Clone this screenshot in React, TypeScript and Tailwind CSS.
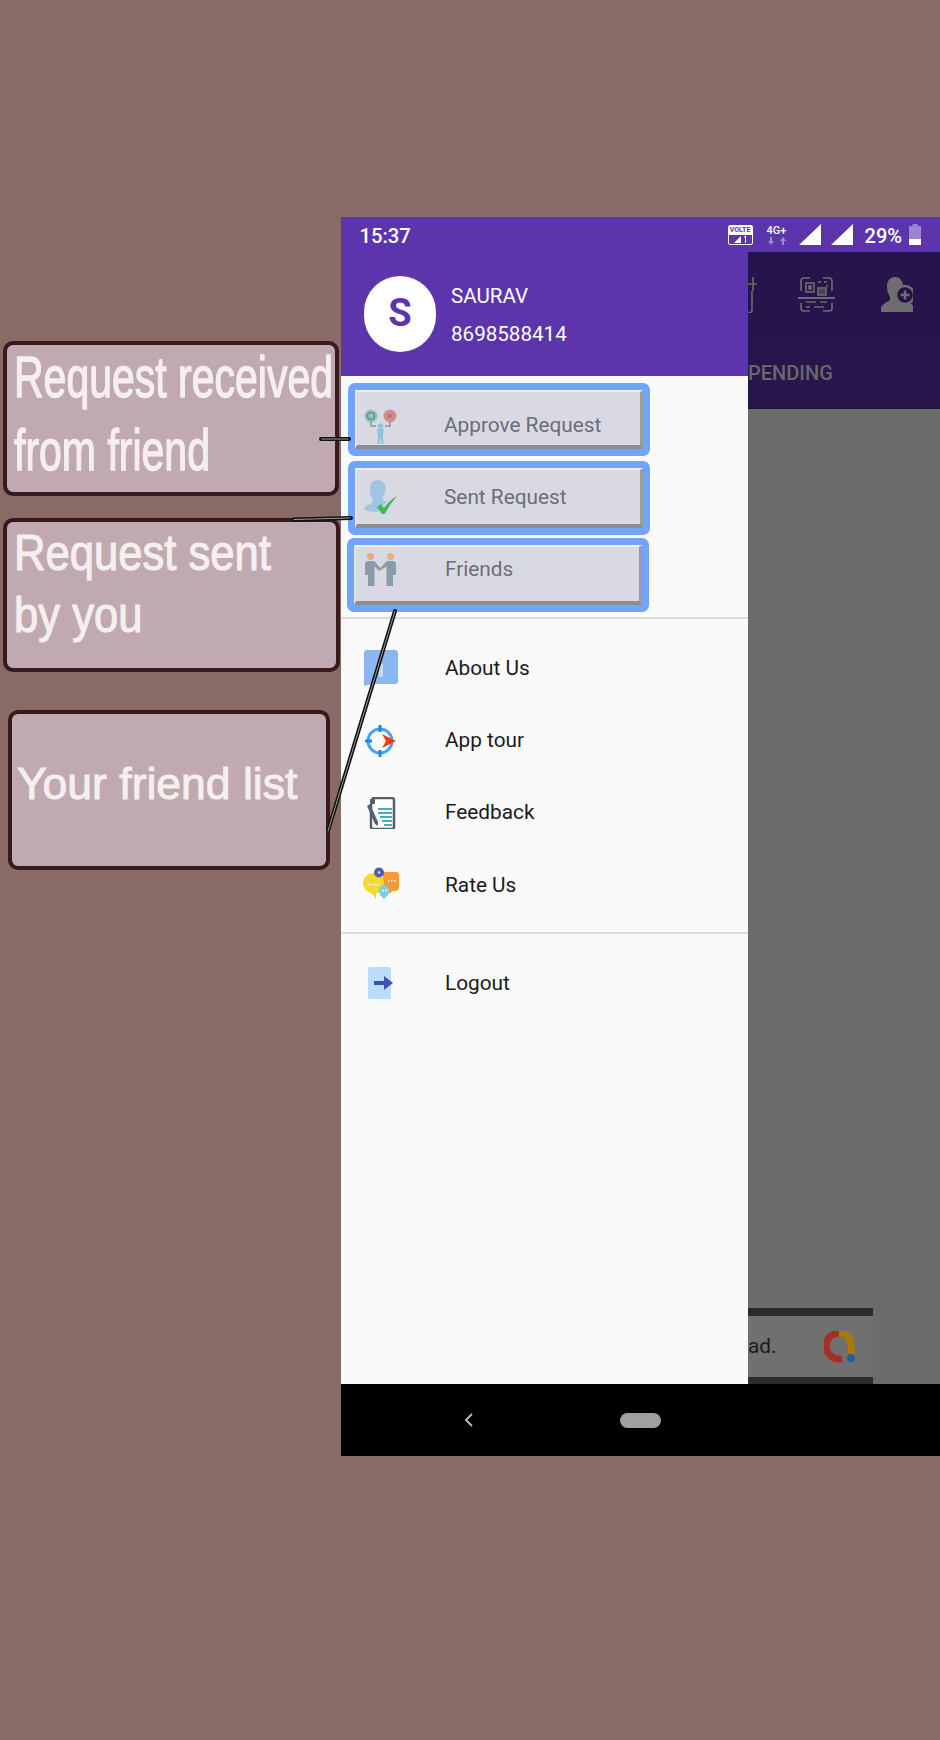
const roboto = "font-['Roboto',sans-serif]";

const callouts = [
  { lines: ['Request received', 'from friend'], cls: 'ml-[3px] h-[155px] w-[336px] pt-[12px]' },
  { lines: ['Request sent', 'by you'], cls: 'ml-[3px] mt-[22px] h-[154px] w-[337px] pt-[4px]' },
  { lines: ['Your friend list'], cls: 'ml-[8px] mt-[38px] h-[160px] w-[322px] pt-[40px]' },
];

function Callout({ lines, cls, idx }: { lines: string[]; cls: string; idx: number }) {
  return (
    <div className={`${cls} shrink-0 rounded-[10px] border-[4px] border-[#381a1c] bg-[#c1a9b1] font-['Liberation_Sans',sans-serif] text-[#f6efef] [-webkit-text-stroke:1px_#f6efef]`}>
      {lines.map((l) => (
        <div
          key={l}
          className={
            idx === 0
              ? 'origin-bottom scale-y-[1.42] pl-[7px] text-[41px] leading-[73px] whitespace-nowrap'
              : idx === 1
                ? 'origin-bottom scale-y-[1.13] pl-[7px] text-[43.6px] leading-[62px] whitespace-nowrap'
                : 'pl-[5px] text-[44.5px] leading-[60px] whitespace-nowrap'
          }
        >
          {l}
        </div>
      ))}
    </div>
  );
}

function ApproveIcon() {
  return (
    <svg width="36" height="36" viewBox="0 0 36 36">
      <circle cx="8" cy="8" r="6.5" fill="#8cc5bb" />
      <circle cx="8" cy="8" r="3.5" fill="none" stroke="#5c7f8a" strokeWidth="1.2" />
      <circle cx="27" cy="8" r="6.5" fill="#d98a8a" />
      <path d="M24.5 5.5l5 5m0-5l-5 5" stroke="#6a6f90" strokeWidth="1" />
      <path d="M8 14v4h5m14-4v4h-5" fill="none" stroke="#7f97a8" strokeWidth="1.4" />
      <circle cx="17.500" cy="18" r="2.800" fill="#8fc4e0" />
      <path d="M14 21h7l-1 7 .500 8h-2l-1-7-1 7h-2l.500-8z" fill="#8fc4e0" />
    </svg>
  );
}

function SentIcon() {
  return (
    <svg width="38" height="38" viewBox="0 0 38 38">
      <path d="M17 1c4.500 0 7.500 3.500 7.500 8.500 0 4-1.500 7-3 9.500 0 2 2 3 5 4-3 1-6 4-6.500 9-6 1.500-13 1-17-1.500C2 27 10 26 12 22c0-1.500-1-2.500-2-4.500-1-3-1-5-1-8C9 4.500 12.500 1 17 1z" fill="#9fc5e3" />
      <path d="M16 28l4-3 3 4c3-5 8-9 13-12-4 5-9 11-12 18h-3z" fill="#45b957" />
    </svg>
  );
}

function FriendsIcon() {
  return (
    <svg width="32" height="33" viewBox="0 0 32 33">
      <circle cx="5.500" cy="3.500" r="3.500" fill="#e3b07f" />
      <circle cx="25.500" cy="3.500" r="3.500" fill="#e3b07f" />
      <path d="M0 11c0-2 1.500-3 3-3h5c1 0 2 .5 2.500 1.500L15.500 15l-1.500 3-4.500-4.500V33H3V22H0z" fill="#8a9cab" />
      <path d="M31 11c0-2-1.500-3-3-3h-5c-1 0-2 .5-2.500 1.500L15.500 15l-1.500 3 7.500-4.500V33H28V22h3z" fill="#8a9cab" />
    </svg>
  );
}

function AboutIcon() {
  return (
    <svg width="34" height="36" viewBox="0 0 34 36">
      <path d="M3 0h28a3 3 0 0 1 3 3v28a3 3 0 0 1-3 3H8l-8 2V3a3 3 0 0 1 3-3z" fill="#8ab7f0" />
      <rect x="15" y="14" width="4" height="13" fill="#c4dbf8" />
    </svg>
  );
}

function TourIcon() {
  return (
    <svg width="32" height="32" viewBox="0 0 32 32">
      <circle cx="15" cy="16" r="12" fill="none" stroke="#43a5f5" strokeWidth="3" />
      <path d="M15 0v7M15 25v7M0 16h7" stroke="#1e88e5" strokeWidth="3" />
      <path d="M17 9l14 7-14 7 4-7z" fill="#f4380f" />
    </svg>
  );
}

function FeedbackIcon() {
  return (
    <svg width="30" height="32" viewBox="0 0 30 32">
      <path d="M7 1h19a2 2 0 0 1 2 2v27a2 2 0 0 1-2 2H7a2 2 0 0 1-2-2V8z" fill="#fff" stroke="#54616c" strokeWidth="2.500" />
      <path d="M4 2h5v5H4z" fill="#54616c" />
      <path d="M12 11h14v2H12zm0 4h14v2H12zm2 4h12v2H14zm2 4h10v2H16zm2 4h8v2h-8z" fill="#46acc8" />
      <path d="M1 9l3-2 8 18v4l-3-2z" fill="#54616c" />
    </svg>
  );
}

function RateIcon() {
  return (
    <svg width="36" height="36" viewBox="0 0 36 36">
      <path d="M20 5h13a3 3 0 0 1 3 3v12a4 4 0 0 1-4 4h-3l-2 3-2-3h-5z" fill="#f79a35" />
      <path d="M11 6c6 0 10 4.500 10 10s-4 10-8 10.500V32l-4-5.500C4 25 0 21.500 0 16 0 10.500 5 6 11 6z" fill="#f4d935" />
      <circle cx="16" cy="5.500" r="5" fill="#4d5ea8" />
      <circle cx="16" cy="5.500" r="1.300" fill="#d6dcf0" />
      <path d="M21 18c3 0 5 2.500 5 6s-2 6-4 6.500l-1 3-1-3c-2-.5-4-3-4-6.500s2-6 5-6z" fill="#7ccfe0" />
      <path d="M5 17.500h1.500M8 17.500h1.500M11 17.500h1.500M14 17.500h1.500M25 14h1.500M28 14h1.500M31 14h1.500M19.500 23.500H21M22.500 23.500H24" stroke="#fff" strokeWidth="1.500" />
    </svg>
  );
}

function LogoutIcon() {
  return (
    <svg width="26" height="32" viewBox="0 0 26 32">
      <rect width="23" height="32" rx="2" fill="#bbdcfa" />
      <path d="M6 14h10v-5l9 7-9 7v-5H6z" fill="#3f51b5" />
    </svg>
  );
}

function QrIcon() {
  return (
    <svg width="37" height="35" viewBox="0 0 37 35" fill="none" stroke="#6d6a70" strokeWidth="1.600">
      <path d="M3 14V4a3 3 0 0 1 3-3h6M25 1h6a3 3 0 0 1 3 3v10M3 26v5a3 3 0 0 0 3 3h6M25 34h6a3 3 0 0 0 3-3v-5" />
      <path d="M0 21h37" strokeWidth="2" />
      <rect x="8" y="6" width="8" height="9" />
      <rect x="11" y="9" width="2" height="3" fill="#6d6a70" />
      <rect x="20" y="11" width="8" height="7" fill="#6d6a70" fillOpacity=".5" />
      <path d="M20 5h3M26 5h3M29 8v2M8 25h10M8 30h4M16 30h10M22 25h7" />
    </svg>
  );
}

function PersonAddIcon() {
  return (
    <svg width="32" height="35" viewBox="0 0 32 35">
      <path d="M14 0c5 0 8 4 8 9 0 4-1 7-3 9v5c4 1 13 3 13 6v6H0v-4c1-4 7-6 9-8v-3C7 17 6 13 6 9c0-5 3-9 8-9z" fill="#6f6d70" />
      <circle cx="24" cy="18" r="9" fill="#231443" stroke="#6f6d70" strokeWidth="2.500" />
      <path d="M24 13.500v9M19.500 18h9" stroke="#6f6d70" strokeWidth="2.500" />
    </svg>
  );
}

const topItems = [
  { label: 'Approve Request', icon: <ApproveIcon />, cls: 'ml-[7.500px] mt-[7px] h-[73px] w-[302px]', pad: 'pl-[6px] pt-[14px]', gap: 'w-[81px]' },
  { label: 'Sent Request', icon: <SentIcon />, cls: 'ml-[7.500px] mt-[5px] h-[74px] w-[302px]', pad: 'pl-[4px] pt-[2px]', gap: 'w-[83px]' },
  { label: 'Friends', icon: <FriendsIcon />, cls: 'ml-[6.500px] mt-[3px] h-[74px] w-[302px]', pad: 'pl-[9px] pb-[9px]', gap: 'w-[80px]' },
];

const midItems = [
  { label: 'About Us', icon: <AboutIcon /> },
  { label: 'App tour', icon: <TourIcon /> },
  { label: 'Feedback', icon: <FeedbackIcon /> },
  { label: 'Rate Us', icon: <RateIcon /> },
];

function MenuRow({ label, icon }: { label: string; icon: React.ReactNode }) {
  return (
    <div className="flex h-[72.4px] items-center">
      <div className="flex w-[104.500px] shrink-0 pl-[5px]">
        <div className="flex w-[70px] justify-center">{icon}</div>
      </div>
      <span className="text-[20.8px] text-[#1b1b1b]">{label}</span>
    </div>
  );
}

export default function App() {
  return (
    <div className={`relative flex h-[1740px] w-[940px] overflow-hidden bg-[#8a6a66] pt-[217px] ${roboto}`}>
      <div className="flex w-[340.5px] shrink-0 flex-col pt-[124px]">
        {callouts.map((c, i) => (
          <Callout key={i} idx={i} lines={c.lines} cls={c.cls} />
        ))}
      </div>

      <div className="flex h-[1239px] w-[599.5px] flex-col">
        {/* status bar */}
        <div className="flex h-[35px] shrink-0 items-center bg-[#5c35ad] pr-[19px] pl-[19px] text-white">
          <span className="mt-[3px] text-[20.2px] font-medium">15:37</span>
          <div className="ml-auto flex items-center">
            <div className="flex h-[20px] w-[25px] flex-col items-center rounded-[2px] border border-white bg-[#5c35ad]">
              <span className="w-full bg-white text-center text-[7px] leading-[9px] font-bold text-[#5c35ad]">VOLTE</span>
              <svg width="18" height="9" viewBox="0 0 18 9">
                <path d="M10 1v7H3z" fill="#fff" />
                <path d="M13 2l1.500-1V8" stroke="#fff" fill="none" strokeWidth="1" />
              </svg>
            </div>
            <div className="ml-[14px] flex w-[20px] flex-col items-center">
              <span className="text-[11px] leading-[12px] font-medium">4G+</span>
              <svg width="20" height="8" viewBox="0 0 20 8" fill="#9d8bd6">
                <path d="M3 0h2v4h2L4 8 1 4h2zM15 8h2V4h2l-3-4-3 4h2z" />
              </svg>
            </div>
            <svg className="ml-[12px]" width="22" height="21" viewBox="0 0 22 21"><path d="M22 0v21H0z" fill="#fff" /></svg>
            <svg className="ml-[10px]" width="22" height="21" viewBox="0 0 22 21"><path d="M22 0v21H0z" fill="#fff" /></svg>
            <span className="mt-[2px] ml-[12px] text-[20px] font-medium">29%</span>
            <svg className="ml-[7px]" width="12" height="21" viewBox="0 0 12 21">
              <path d="M3.500 0h5v2H12v19H0V2h3.500z" fill="#9a85d4" />
              <path d="M0 15h12v6H0z" fill="#fff" />
            </svg>
          </div>
        </div>

        <div className="flex min-h-0 flex-1">
          {/* drawer */}
          <div className="flex w-[407.5px] shrink-0 flex-col bg-[#fafafa]">
            <div className="flex h-[124px] shrink-0 items-center bg-[#5c35ad] pb-[1px] pl-[23.500px]">
              <div className="flex h-[76px] w-[72px] items-center justify-center rounded-full bg-white text-[38px] font-bold text-[#5c35ad]">S</div>
              <div className="mt-[2px] ml-[15px] text-[20.6px] text-white">
                <div className="leading-[38px]">SAURAV</div>
                <div className="leading-[38px]">8698588414</div>
              </div>
            </div>

            <div className="h-[243px] shrink-0 border-b-2 border-[#dcdcdc] bg-[#fafafa]">
              {topItems.map((t) => (
                <div key={t.label} className={`${t.cls} rounded-[7px] bg-[#70a5fb] p-[7px]`}>
                  <div className={`flex h-full items-center ${t.pad} rounded-[1px] border-t-2 border-r-[3px] border-b-[4px] border-l-2 border-t-[#eeeef3] border-r-[#9b9ba0] border-b-[#8d8d92] border-l-[#e6e6ee] bg-[#d9d9e3]`}>
                    <div className={`flex ${t.gap} shrink-0 justify-start`}>{t.icon}</div>
                    <span className="text-[20.8px] text-[#6d6e75]">{t.label}</span>
                  </div>
                </div>
              ))}
            </div>

            <div className="h-[315px] shrink-0 border-b-2 border-[#dcdcdc] pt-[13px]">
              {midItems.map((m) => (
                <MenuRow key={m.label} {...m} />
              ))}
            </div>

            <div className="pt-[13px]">
              <MenuRow label="Logout" icon={<LogoutIcon />} />
            </div>
          </div>

          {/* page behind the drawer, dimmed */}
          <div className="flex min-w-0 flex-1 flex-col bg-[#6b6b6b]">
            <div className="flex h-[85px] shrink-0 items-center bg-[#26154a] pr-[27px]">
              <div className="h-[36px] w-[9px] overflow-hidden">
                <svg width="9" height="36" viewBox="0 0 9 36" fill="none" stroke="#6d6a70" strokeWidth="1.600">
                  <path d="M0 7h9M5 0v14M4 14v19c0 2-2 3-4 3" />
                </svg>
              </div>
              <div className="ml-[41px]"><QrIcon /></div>
              <div className="ml-auto"><PersonAddIcon /></div>
            </div>
            <div className="flex h-[72px] shrink-0 items-center border-b border-[#1d1038] bg-[#27164b]">
              <span className="text-[20px] font-medium text-[#69666e]">PENDING</span>
            </div>
            <div className="flex-1" />
            <div className="flex h-[76px] w-[125px] shrink-0 flex-col bg-[#707070]">
              <div className="h-[8px] bg-[#2a2a2a]" />
              <div className="flex flex-1 items-center justify-between pr-[17px]">
                <span className="text-[20.8px] text-[#1c1c1c]">ad.</span>
                <svg width="32" height="32" viewBox="0 0 32 32" fill="none">
                  <path d="M15 2a13 13 0 0 0 0 26" stroke="#a52e27" strokeWidth="7" strokeLinecap="round" />
                  <path d="M15 2c6 0 12 4 12 12v11" stroke="#a57b05" strokeWidth="7" />
                  <circle cx="27" cy="27" r="4" fill="#2458a8" />
                </svg>
              </div>
              <div className="h-[7px] bg-[#2a2a2a]" />
            </div>
          </div>
        </div>

        {/* nav bar */}
        <div className="relative flex h-[72px] shrink-0 items-center bg-black">
          <svg className="ml-[122px]" width="12" height="16" viewBox="0 0 12 16" fill="none" stroke="#b5b5b5" strokeWidth="2"><path d="M9 2L3 8l6 6" /></svg>
          <div className="ml-[145px] h-[15px] w-[41px] rounded-full bg-[#a0a0a0]" />
        </div>
      </div>

      {/* connector lines drawn on the shot */}
      <svg className="absolute top-0 left-0" width="940" height="1740" fill="none">
        <g strokeLinecap="round">
          <path d="M321 439H349M293 519.500L351 518M328 831L395 611" stroke="#111" strokeWidth="4" />
          <path d="M322 439H348M294 519.500L350 518M328 831L395 611" stroke="#999" strokeWidth="1" />
        </g>
      </svg>
    </div>
  );
}
